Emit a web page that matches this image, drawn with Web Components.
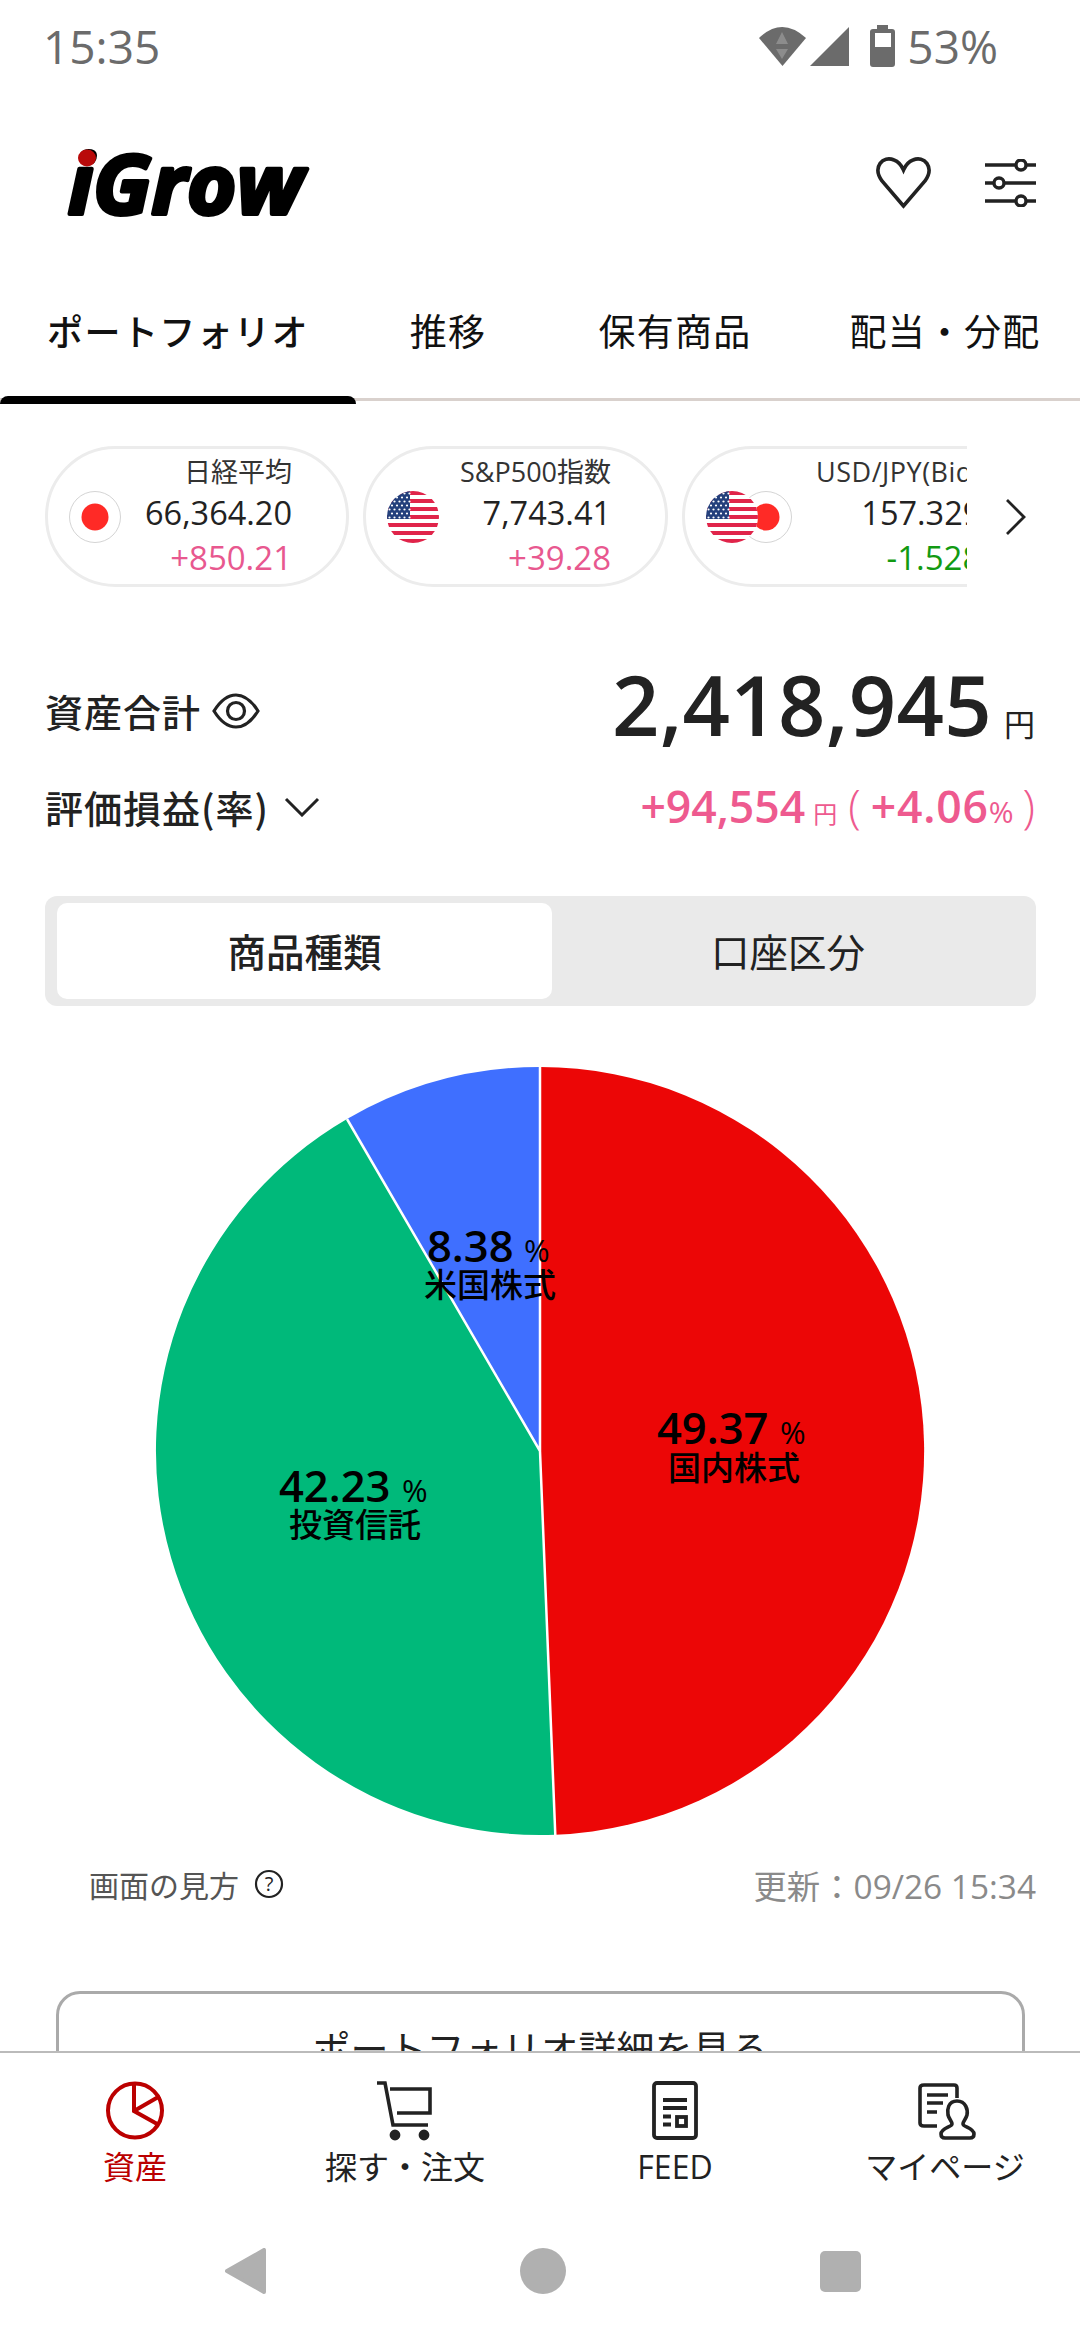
<!DOCTYPE html>
<html lang="ja">
<head>
<meta charset="utf-8">
<title>iGrow</title>
<style>
html,body{margin:0;padding:0;background:#fff;}
body{width:1080px;height:2340px;overflow:hidden;font-family:"Open Sans","Noto Sans CJK JP",sans-serif;color:#222;}
</style>
</head>
<body>
<app-screen>
  <status-bar></status-bar>
  <app-header></app-header>
  <tab-bar>
    <tab-item active>ポートフォリオ</tab-item>
    <tab-item>推移</tab-item>
    <tab-item>保有商品</tab-item>
    <tab-item>配当・分配</tab-item>
  </tab-bar>
  <index-strip>
    <index-chip>
      <flag-icon slot="flag" kind="jp"></flag-icon>
      <span slot="name">日経平均</span>
      <span slot="value">66,364.20</span>
      <span slot="change">+850.21</span>
    </index-chip>
    <index-chip style="--gap:21px">
      <flag-icon slot="flag" kind="us"></flag-icon>
      <span slot="name">S&amp;P500指数</span>
      <span slot="value">7,743.41</span>
      <span slot="change">+39.28</span>
    </index-chip>
    <index-chip down style="--name-ls:.5px">
      <flag-icon slot="flag" kind="us" front></flag-icon>
      <flag-icon slot="flag" kind="jp" behind></flag-icon>
      <span slot="name">USD/JPY(Bid)</span>
      <span slot="value">157.329</span>
      <span slot="change">-1.528</span>
    </index-chip>
  </index-strip>
  <asset-summary></asset-summary>
  <segment-switch></segment-switch>
  <pie-chart></pie-chart>
  <chart-foot></chart-foot>
  <detail-button>ポートフォリオ詳細を見る</detail-button>
  <bottom-nav slot="nav"></bottom-nav>
</app-screen>

<script>
class UiBase extends HTMLElement{
    constructor(){
        super()
        this.attachShadow({mode:'open'}).innerHTML=`<style>${this.constructor.css}</style>${this.constructor.html}`
    }
}

class AppScreen extends UiBase{
    static css=`
    :host{display:flex;flex-direction:column;width:1080px;height:2340px;}
    .content{flex:1;min-height:0;overflow:hidden;display:block;}
    `
    static html=`<div class="content"><slot></slot></div><slot name="nav"></slot>`
}

class StatusBar extends UiBase{
    static css=`
    :host{display:flex;align-items:flex-start;height:96px;padding:0 82px 0 43px;box-sizing:border-box;color:#6b6b6b;font-size:46px;}
    .time{line-height:92px;}
    .icons{margin-left:auto;display:flex;align-items:flex-start;padding-top:25px;}
    svg{display:block;}
    .pct{line-height:42px;margin-left:12px;}
    `
    static html=`
    <span class="time">15:35</span>
    <div class="icons">
      <svg width="136" height="44" viewBox="759 25 136 44">
        <path d="M759 38Q782 16 806 38L782.5 66Z" fill="#6b6b6b"/>
        <path d="M782 32l6 12h-12zM782 59l-6-10h12z" fill="#8c8c8c"/>
        <path d="M849 27V66H810Z" fill="#6b6b6b"/>
        <path d="M877 25h11v4h4q3 0 3 3v32q0 3-3 3h-19q-3 0-3-3V32q0-3 3-3h4zM875 33v14h16V33z" fill="#6b6b6b" fill-rule="evenodd"/>
      </svg>
      <span class="pct">53%</span>
    </div>`
}

class AppHeader extends UiBase{
    static css=`
    :host{display:flex;align-items:center;height:174px;padding:0 44px 0 50px;box-sizing:border-box;}
    .logo{display:block;overflow:visible;}
    .logo text{font:italic 700 82px "Open Sans",sans-serif;fill:#000;stroke:#000;stroke-width:4px;stroke-linejoin:round;}
    .acts{margin-left:auto;display:flex;gap:54px;align-items:center;}
    .acts svg{display:block;fill:none;stroke:#222;}
    `
    static html=`
    <svg class="logo" width="280" height="126" viewBox="50 120 280 126">
      <text x="68" y="214" textLength="235" lengthAdjust="spacingAndGlyphs">iGrow</text>
      <ellipse cx="87" cy="158" rx="9" ry="8.5" fill="#b90a0a"/>
    </svg>
    <div class="acts">
      <svg width="56" height="52" viewBox="874 157 56 52" stroke-width="3.6">
        <path d="M902.5 206L881 181C871 167 882 155 893 160Q899 162 902.5 170Q906 162 912 160C923 155 934 167 924 181Z"/>
      </svg>
      <svg width="51" height="48" viewBox="984 159 51 48" stroke-width="3.4">
        <path d="M984 165H1015M1025 165H1035M984 183H993M1003 183H1035M984 201H1015M1025 201H1035"/>
        <circle cx="1020" cy="165" r="5"/><circle cx="998" cy="183" r="5"/><circle cx="1020" cy="201" r="5"/>
      </svg>
    </div>`
}

class TabBar extends UiBase{
    static css=`
    :host{display:grid;grid-template-columns:356px 184px 270px 270px;height:131px;box-sizing:border-box;border-bottom:3px solid #d9d1cd;}
    `
    static html=`<slot></slot>`
}

class TabItem extends UiBase{
    static css=`
    :host{display:flex;align-items:center;justify-content:center;position:relative;height:120px;padding-bottom:2px;font-size:37px;letter-spacing:1.2px;color:#111;}
    :host([active]){font-weight:500;font-size:36px;letter-spacing:1.4px;}
    :host([active])::after{content:"";position:absolute;left:0;right:0;bottom:-12px;height:8px;background:#000;border-radius:8px 8px 0 0;}
    `
    static html=`<slot></slot>`
}

class IndexStrip extends UiBase{
    static css=`
    :host{display:flex;align-items:center;padding:45px 0 0 45px;}
    .scroll{width:922px;overflow:hidden;display:flex;gap:14px;}
    svg{display:block;margin-left:38px;fill:none;stroke:#222;stroke-width:2.8;}
    `
    static html=`
    <div class="scroll"><slot></slot></div>
    <svg width="22" height="38" viewBox="0 0 22 38"><path d="M2 2L19 19L2 36"/></svg>`
}

class IndexChip extends UiBase{
    static css=`
    :host{display:flex;flex:none;align-items:center;height:141px;box-sizing:border-box;border:3px solid #ececec;border-radius:71px;padding:0 54px 0 21px;gap:var(--gap,24px);}
    .flags{display:flex;align-items:center;}
    .rows{display:flex;flex-direction:column;align-items:flex-end;}
    .name{font-size:27px;line-height:40px;color:#333;letter-spacing:var(--name-ls,0);}
    .value{font-size:32.5px;line-height:42px;color:#222;}
    .change{font-size:33px;line-height:48px;color:#e8588f;}
    :host([down]) .change{color:#129a12;}
    `
    static html=`
    <div class="flags"><slot name="flag"></slot></div>
    <div class="rows">
      <div class="name"><slot name="name"></slot></div>
      <div class="value"><slot name="value"></slot></div>
      <div class="change"><slot name="change"></slot></div>
    </div>`
}

let flagSeq=0
class FlagIcon extends HTMLElement{
    connectedCallback(){
        const root=this.attachShadow({mode:'open'})
        const css=`:host{display:block;width:52px;height:52px;}
        :host([front]){position:relative;z-index:1;}
        :host([behind]){margin-left:-18px;}
        svg{display:block;}`
        if(this.getAttribute('kind')==='jp'){
            root.innerHTML=`<style>${css}</style><svg width="52" height="52" viewBox="0 0 52 52">
            <circle cx="26" cy="26" r="25.5" fill="#fff" stroke="#d4d4d4"/><circle cx="26" cy="26" r="13.5" fill="#ff2a26"/></svg>`
            return
        }
        const id='c'+(++flagSeq)
        let stripes='',stars=''
        for(let i=0;i<13;i+=2) stripes+=`<rect x="0" y="${i*4}" width="52" height="4" fill="#e0244a"/>`
        for(let r=0;r<7;r++){
            for(let c=0;c<(r%2?4:5);c++){
                stars+=`<circle cx="${(r%2?5:2.5)+c*5}" cy="${2.5+r*4}" r="1.1" fill="#fff"/>`
            }
        }
        root.innerHTML=`<style>${css}</style><svg width="52" height="52" viewBox="0 0 52 52">
        <clipPath id="${id}"><circle cx="26" cy="26" r="26"/></clipPath>
        <g clip-path="url(#${id})"><rect width="52" height="52" fill="#fff"/>${stripes}
        <rect width="23" height="28" fill="#24407c"/>${stars}</g></svg>`
    }
}

class AssetSummary extends UiBase{
    static css=`
    :host{display:block;padding:77px 45px 0;}
    .row{display:flex;align-items:center;justify-content:space-between;height:96px;}
    .label{display:flex;align-items:center;font-family:"Noto Sans CJK JP",sans-serif;font-size:38px;font-weight:500;letter-spacing:1px;color:#222;padding-bottom:3px;}
    svg{display:block;fill:none;stroke:#222;}
    .total{display:flex;align-items:baseline;font-size:83px;font-weight:600;letter-spacing:.3px;color:#222;line-height:96px;padding-top:4px;}
    .total small{font-size:31px;font-weight:400;margin-left:12px;letter-spacing:0;}
    .gain{display:flex;align-items:baseline;font-size:44.5px;font-weight:600;color:#ee5a8f;line-height:96px;padding-top:2px;}
    .gain small{font-size:24px;font-weight:400;margin-left:8px;}
    .gain .rate{letter-spacing:.8px;}
    .gain .pct{font-size:30px;margin-left:0;}
    .gain .par{font-weight:300;font-size:46px;}
    `
    static html=`
    <div class="row">
      <div class="label">資産合計
        <svg style="margin-left:11px" width="48" height="36" viewBox="0 0 48 36" stroke-width="3.2">
          <path d="M2 18Q12 2 24 2T46 18Q36 34 24 34T2 18Z"/><circle cx="24" cy="18" r="8.5"/>
        </svg>
      </div>
      <div class="total">2,418,945<small>円</small></div>
    </div>
    <div class="row">
      <div class="label">評価損益(率)
        <svg style="margin-left:15px" width="36" height="20" viewBox="0 0 36 20" stroke-width="3">
          <path d="M2 2L18 18L34 2"/>
        </svg>
      </div>
      <div class="gain">+94,554<small>円</small><span class="par" style="margin:0 10px 0 11px">(</span><span class="rate">+4.06</span><small class="pct">%</small><span class="par" style="margin-left:9px">)</span></div>
    </div>`
}

class SegmentSwitch extends UiBase{
    static css=`
    :host{display:grid;grid-template-columns:495px 1fr;height:110px;margin:40px 44px 0 45px;padding:7px 12px;box-sizing:border-box;background:#eaeaea;border-radius:12px;}
    div{display:flex;align-items:center;justify-content:center;font-size:38.5px;color:#222;padding-bottom:3px;}
    .on{background:#fff;border-radius:10px;font-weight:500;}
    `
    static html=`<div class="on">商品種類</div><div>口座区分</div>`
}

class PieChart extends UiBase{
    static css=`
    :host{display:block;margin-top:54px;height:784px;}
    svg{display:block;}
    text{fill:#000;}
    .n{font-size:43.5px;font-weight:550;}
    .p{font-size:31px;}
    .l{font-size:33px;font-weight:500;text-anchor:middle;}
    `
    static html=`
    <svg width="1080" height="784" viewBox="0 1060 1080 784">
      <path d="M540 1451V1067A384 384 0 0 1 555.3 1834.7Z" fill="#ec0606"/>
      <path d="M540 1451L555.3 1834.7A384 384 0 0 1 347 1119Z" fill="#00b97a"/>
      <path d="M540 1451L347 1119A384 384 0 0 1 540 1067Z" fill="#3f6fff"/>
      <path d="M540 1067V1451L555.3 1835M540 1451L347 1119" fill="none" stroke="#fff" stroke-width="2.5"/>
      <text class="n" x="657" y="1444">49.37</text><text class="p" x="780" y="1444">%</text>
      <text class="l" x="734" y="1480">国内株式</text>
      <text class="n" x="279" y="1502">42.23</text><text class="p" x="402" y="1502">%</text>
      <text class="l" x="355" y="1537">投資信託</text>
      <text class="n" x="427" y="1262">8.38</text><text class="p" x="524" y="1262">%</text>
      <text class="l" x="490" y="1297">米国株式</text>
    </svg>`
}

class ChartFoot extends UiBase{
    static css=`
    :host{display:flex;align-items:center;justify-content:space-between;height:60px;margin-top:10px;padding:0 44px 0 89px;}
    .how{display:flex;align-items:center;gap:15px;color:#555;font-size:30px;}
    .upd{color:#8a8a8a;font-size:33.4px;}
    svg{display:block;}
    `
    static html=`
    <div class="how">画面の見方
      <svg width="30" height="30" viewBox="0 0 30 30"><circle cx="15" cy="15" r="13" fill="none" stroke="#222" stroke-width="2.2"/><text x="15" y="22" text-anchor="middle" font-size="20" fill="#222">?</text></svg>
    </div>
    <div class="upd">更新：09/26 15:34</div>`
}

class DetailButton extends UiBase{
    static css=`
    :host{display:flex;align-items:center;justify-content:center;height:110px;margin:77px 55px 0 56px;box-sizing:border-box;border:3px solid #aaa;border-radius:24px;font-size:38px;color:#222;}
    `
    static html=`<slot></slot>`
}

class NavItem extends UiBase{
    static css=`
    :host{display:flex;flex-direction:column;align-items:center;font-size:32px;line-height:44px;color:#222;}
    :host([active]){color:#bb0000;}
    ::slotted(svg){display:block;margin-bottom:4px;fill:none;stroke:currentColor;}
    `
    static html=`<slot name="icon"></slot><slot></slot>`
}

class BottomNav extends UiBase{
    static css=`
    :host{display:block;flex:none;height:289px;box-sizing:border-box;border-top:2px solid #bbb;background:#fff;}
    .items{display:grid;grid-template-columns:repeat(4,270px);padding-top:28px;}
    .keys{display:flex;align-items:center;gap:254px;padding-left:225px;margin-top:59px;}
    svg{display:block;}
    `
    static html=`
    <div class="items">
      <nav-item active>
        <svg slot="icon" width="80" height="60" viewBox="95 2081 80 60" stroke-width="4">
          <circle cx="135" cy="2110.5" r="27"/><path d="M134 2083V2111L159 2125M134 2111L160 2096"/>
        </svg>資産</nav-item>
      <nav-item>
        <svg slot="icon" width="80" height="60" viewBox="365 2081 80 60" stroke-width="3.6">
          <path d="M377 2083H385L393 2125H428M390 2089H430V2113H397"/>
          <circle cx="395" cy="2135" r="3.6" fill="#222"/><circle cx="424" cy="2135" r="3.6" fill="#222"/>
        </svg>探す・注文</nav-item>
      <nav-item>
        <svg slot="icon" width="80" height="60" viewBox="635 2081 80 60" stroke-width="3.8">
          <rect x="654" y="2083" width="42" height="55" rx="3"/>
          <path d="M663 2100H687M663 2108H687M663 2116.5H671M663 2124.5H671"/><rect x="677" y="2117" width="9" height="9"/>
        </svg>FEED</nav-item>
      <nav-item>
        <svg slot="icon" width="80" height="60" viewBox="905 2081 80 60" stroke-width="3.6">
          <path d="M957 2098V2088Q957 2085 954 2085H924Q920 2085 920 2088V2123Q920 2126 924 2126H937"/>
          <path d="M927 2095H948M927 2103H943M927 2112H937"/>
          <path d="M957 2101C948 2101 947 2110 948 2115C949 2119 952 2121 952 2124C952 2127 941 2128 941 2134Q941 2138 945 2138H970Q974 2138 974 2134C974 2128 963 2127 963 2124C963 2121 966 2119 967 2115C968 2110 966 2101 957 2101Z"/>
        </svg>マイページ</nav-item>
    </div>
    <div class="keys">
      <svg width="41" height="46" viewBox="225 2248 41 46"><path d="M264 2250V2292L227 2271Z" fill="#b0b0b0" stroke="#b0b0b0" stroke-width="4" stroke-linejoin="round"/></svg>
      <svg width="46" height="46" viewBox="0 0 46 46"><circle cx="23" cy="23" r="23" fill="#b0b0b0"/></svg>
      <svg width="41" height="41" viewBox="0 0 41 41"><rect width="41" height="41" rx="5" fill="#b0b0b0"/></svg>
    </div>`
}

const defs={'app-screen':AppScreen,'status-bar':StatusBar,'app-header':AppHeader,'tab-bar':TabBar,'tab-item':TabItem,
    'index-strip':IndexStrip,'index-chip':IndexChip,'flag-icon':FlagIcon,'asset-summary':AssetSummary,
    'segment-switch':SegmentSwitch,'pie-chart':PieChart,'chart-foot':ChartFoot,'detail-button':DetailButton,
    'nav-item':NavItem,'bottom-nav':BottomNav}
for(const name in defs) customElements.define(name,defs[name])
</script>
</body>
</html>
